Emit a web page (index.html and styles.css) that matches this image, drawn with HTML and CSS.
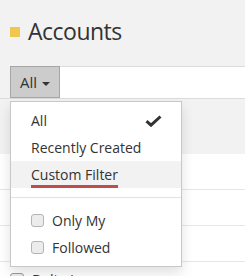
FILE: index.html
```html
<!DOCTYPE html>
<html lang="en">
<head>
    <meta charset="UTF-8">
    <meta name="viewport" content="width=device-width, initial-scale=1.0">
    <title>Accounts</title>
    <link rel="stylesheet" href="styles.css">
</head>
<body>

    <div class="page-header">
        <span class="header-mark"></span>
        <h1>Accounts</h1>
    </div>

    <div class="search-row">
        <button class="filter-btn">All <span class="caret"></span></button>
        <input type="text" class="search-input">
    </div>

    <div class="list">
        <div class="list-header"></div>
        <div class="list-row"><span class="row-check"></span></div>
        <div class="list-row"><span class="row-check"></span></div>
        <div class="list-row"><span class="row-check"></span></div>
        <div class="list-row"><span class="row-check"></span><span class="row-name">Delta Inc</span></div>
    </div>

    <!-- filter menu, open -->
    <ul class="dropdown-menu">
        <li class="menu-item">All
            <svg class="check" width="17" height="12" viewBox="0 0 17 12">
                <path d="M1.5 6.2 L6 10.2 L15.5 1.5" fill="none" stroke="#333" stroke-width="3"/>
            </svg>
        </li>
        <li class="menu-item">Recently Created</li>
        <li class="menu-item active"><span class="focus-line">Custom Filter</span></li>
        <li class="divider"></li>
        <li class="menu-item"><span class="box"></span>Only My</li>
        <li class="menu-item"><span class="box"></span>Followed</li>
    </ul>

</body>
</html>
```

FILE: styles.css
```css
body {
    margin: 0;
    background: #f2f2f2;
    font-family: "Open Sans", Arial, sans-serif;
    color: #333;
    font-size: 14px;
    overflow: hidden;
}
.page-header {
    display: flex;
    align-items: center;
    padding: 10px 10px 0 10px;
    height: 42px;
}
.header-mark {
    width: 10px;
    height: 10px;
    background: #f0c850;
    margin-right: 8px;
    margin-top: 2px;
}
h1 {
    margin: 0;
    font-size: 23px;
    letter-spacing: -0.5px;
    font-weight: normal;
    line-height: 32px;
}
.search-row {
    display: flex;
    margin-top: 14px;
    padding-left: 10px;
    height: 32px;
}
.filter-btn {
    width: 50px;
    height: 32px;
    background: #cccccc;
    border: 1px solid #a6a6a6;
    font-family: inherit;
    font-size: 15px;
    color: #333;
    padding: 0;
    text-align: center;
}
.caret {
    display: inline-block;
    width: 0;
    height: 0;
    border-left: 4px solid transparent;
    border-right: 4px solid transparent;
    border-top: 4px solid #333;
    vertical-align: middle;
    margin-left: 1px;
}
.search-input {
    flex: 1;
    border: none;
    border-top: 1px solid #dcdcdc;
    background: #fff;
    outline: none;
    height: 31px;
    padding: 0;
}
.list {
    border-top: 1px solid #dcdcdc;
}
.list-header {
    height: 55px;
    background: #f2f2f2;
}
.list-row {
    display: flex;
    align-items: center;
    height: 35px;
    background: #fff;
    border-bottom: 1px solid #e6e6e6;
    padding-left: 10px;
}
.row-check {
    width: 12px;
    height: 12px;
    border: 1px solid #999;
    border-radius: 3px;
    background: #eee;
    margin-right: 8px;
}
.dropdown-menu {
    position: absolute;
    left: 10px;
    top: 101px;
    width: 170px;
    margin: 0;
    padding: 5px 0;
    list-style: none;
    background: #fff;
    border: 1px solid #c8c8c8;
    box-shadow: 0 6px 12px rgba(0, 0, 0, 0.12);
}
.menu-item {
    display: flex;
    align-items: center;
    height: 27px;
    padding: 0 19px 0 20px;
    white-space: nowrap;
}
.menu-item.active {
    background: #f2f2f2;
}
.focus-line {
    display: inline-block;
    line-height: 20px;
    border-bottom: 3px solid #bf4d4b;
    margin-top: 3px;
}
.check {
    margin-left: auto;
}
.divider {
    height: 1px;
    margin: 9px 0;
    background: #e2e2e2;
}
.box {
    width: 11px;
    height: 11px;
    border: 1px solid #b4b4b4;
    border-radius: 3px;
    background: #ececec;
    margin-right: 8px;
}
```
